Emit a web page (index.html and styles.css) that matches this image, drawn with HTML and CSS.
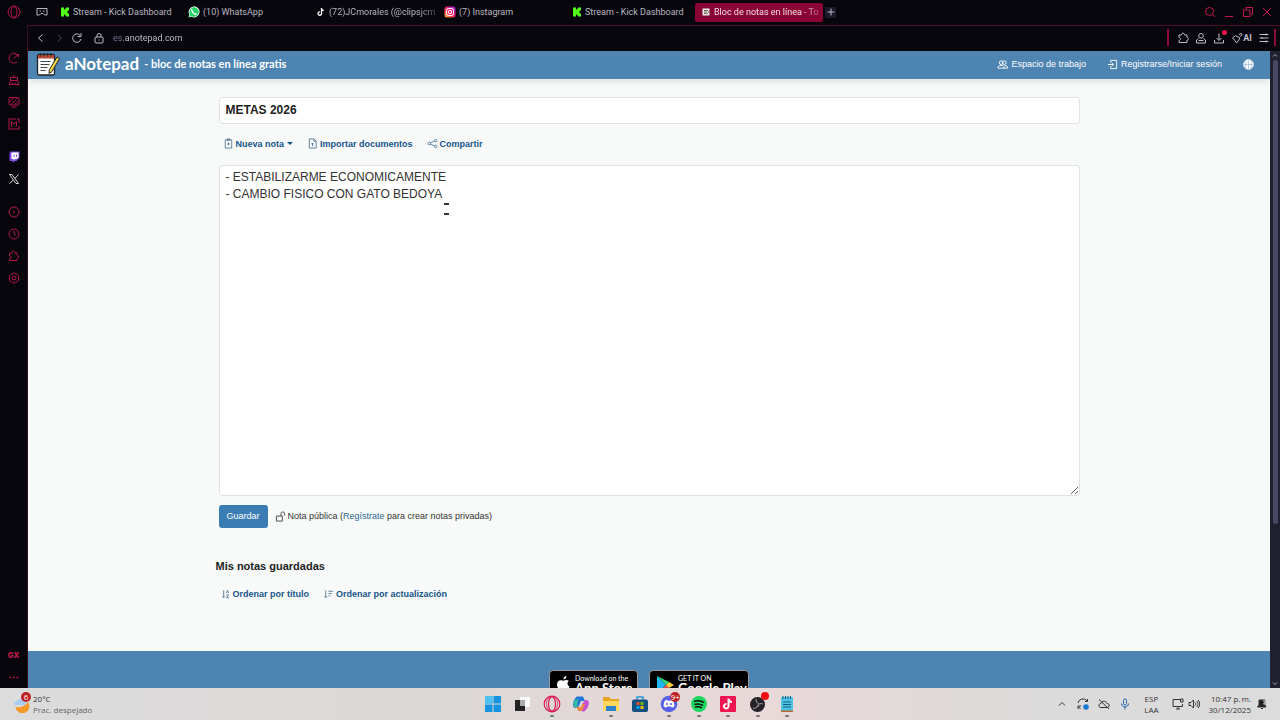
FILE: index.html
```html
<!DOCTYPE html>
<html lang="es">
<head>
  <meta charset="UTF-8">
  <meta name="viewport" content="width=device-width, initial-scale=1.0">
  <title>Bloc de notas en línea</title>
  <link rel="stylesheet" href="styles.css">
</head>
<body>
  <div class="tabbar">
    <button class="opera" aria-label="Opera GX"><svg width="14" height="14" viewBox="0 0 14 14"><circle cx="7" cy="7" r="6"/><ellipse cx="7" cy="7" rx="3" ry="5.500"/></svg></button>
    <button class="corner" aria-label="GX Corner"><svg width="12" height="10" viewBox="0 0 12 10"><path d="M1 1.500h10v6.500H8.500L7 6.500H5L3.500 8H1zM3.500 4h1.500M7 4h1.500"/></svg></button>
    <div class="tabs">
      <button class="tab"><svg class="fav" viewBox="0 0 10 10"><path fill="#53fc18" d="M1 .5h3v2h1v-1h1v-1h3v3H8v1H7v1h1v1h1v3H6v-1H5v-1H4v2H1z"/></svg><span>Stream - Kick Dashboard</span></button>
      <button class="tab"><svg class="fav wide" viewBox="0 0 12 12"><path fill="#fff" d="M.5 11.500l.8-3a5.500 5.500 0 1 1 2.200 2.200z"/><path fill="#25d366" d="M1.200 10.900l.7-2.500a4.800 4.800 0 1 1 1.800 1.800z"/><path d="M4 3.300c-.7 1 .6 3 2 4.200 1 .8 2.200 1 2.600.1" stroke="#fff" stroke-width="1.500" fill="none"/></svg><span>(10) WhatsApp</span></button>
      <button class="tab fade"><svg class="fav" viewBox="0 0 10 10"><path d="M5.500 1v5.500A1.700 1.700 0 1 1 4 4.900M5.500 1.500c.2 1.300 1 2 2.300 2" stroke="#fff" stroke-width="1.300" fill="none"/></svg><span>(72)JCmorales (@clipsjcm</span></button>
      <button class="tab"><svg class="fav wide" viewBox="0 0 12 12"><defs><linearGradient id="ig" x1="0" y1="1" x2="1" y2="0"><stop stop-color="#ffb52e"/><stop offset=".5" stop-color="#f01c6c"/><stop offset="1" stop-color="#9028e8"/></linearGradient></defs><rect x=".5" y=".5" width="11" height="11" rx="2.500" fill="url(#ig)"/><g fill="none" stroke="#fff"><rect x="2.500" y="2.500" width="7" height="7" rx="2"/><circle cx="6" cy="6" r="1.700"/></g></svg><span>(7) Instagram</span></button>
      <button class="tab"><svg class="fav" viewBox="0 0 10 10"><path fill="#53fc18" d="M1 .5h3v2h1v-1h1v-1h3v3H8v1H7v1h1v1h1v3H6v-1H5v-1H4v2H1z"/></svg><span>Stream - Kick Dashboard</span></button>
      <button class="tab fade active"><svg class="fav" viewBox="0 0 10 10"><path fill="#eee" d="M1.500 1.500h7v7h-7z"/><path d="M3 3.500h4M3 5h3M3 6.500h2M9 3L5.500 7.500" stroke="#765"/></svg><span>Bloc de notas en línea - To</span></button>
    </div>
    <button class="newtab" aria-label="Nueva pestaña"><svg width="8" height="8" viewBox="0 0 8 8"><path d="M4 .5v7M.5 4h7"/></svg></button>
    <div class="winbtns">
      <button aria-label="Buscar pestañas"><svg width="12" height="12" viewBox="0 0 12 12"><circle cx="5.500" cy="5.500" r="4"/><path d="M8.500 8.500L11 11"/></svg></button>
      <button aria-label="Minimizar"><svg width="12" height="12" viewBox="0 0 12 12"><path d="M2 10.500h8"/></svg></button>
      <button aria-label="Restaurar"><svg width="12" height="12" viewBox="0 0 12 12"><path d="M1.500 4h6.500v6.500H1.500zM4 3.500v-2h6.500V8H8.500"/></svg></button>
      <button aria-label="Cerrar"><svg width="12" height="12" viewBox="0 0 12 12"><path d="M2 2l8 8M10 2l-8 8"/></svg></button>
    </div>
  </div>

  <div class="window">
    <nav class="sidebar">
      <div class="group">
        <button aria-label="GX Control"><svg viewBox="0 0 12 12"><path d="M9 10A5 5 0 1 1 8 1.500M5.500 6.500l5-4M7.500 2.500h3V5.500"/></svg></button>
        <button aria-label="GX Cleaner"><svg viewBox="0 0 12 12"><path d="M6 1v2.500M2.500 6.500v-3h7v3zM2.500 6.500L1 10.500h10L9.500 6.500M4 10.500l.5-2M7.500 10.500l-.5-2"/></svg></button>
        <button aria-label="Mods"><svg viewBox="0 0 12 12"><rect x="1" y="1.500" width="10" height="7.500" rx="1"/><path d="M1.500 6l4-4M3 8.500L9.500 2M7 8.500L10.500 5M3.500 11h5"/></svg></button>
        <button aria-label="GX Mods"><svg viewBox="0 0 12 12"><path d="M8 1H1v10h10V8M11 5V1H9M3.500 8.500v-5L6 6l2.500-2.500v5"/></svg></button>
      </div>
      <div class="group">
        <button aria-label="Twitch"><svg viewBox="0 0 12 12"><path fill="#7c4ae0" stroke="none" d="M2 .5h9.500V7L8.500 10H6.500l-2 2v-2h-3V2.500z"/><path fill="#fff" stroke="none" d="M3.500 1.500h7v5l-2 1.500H7L5.500 9.500V8h-2z"/><path stroke="#7c4ae0" d="M6 3.500v2.500M8.500 3.500v2.500"/></svg></button>
        <button aria-label="X"><svg viewBox="0 0 12 12"><path stroke="#ddd" d="M1.500 1.500h2.500l6.500 9H8zM10.500 1.500L6.800 5.500M5.300 7l-3.800 3.500"/></svg></button>
      </div>
      <div class="group">
        <button aria-label="Reproductor"><svg viewBox="0 0 12 12"><circle cx="6" cy="6" r="5"/><circle cx="6" cy="6" r=".6"/></svg></button>
        <button aria-label="Historial"><svg viewBox="0 0 12 12"><circle cx="6" cy="6" r="5"/><path d="M6 3v3l2 1"/></svg></button>
        <button aria-label="Extensiones"><svg viewBox="0 0 12 12"><path d="M1.500 3.500L4 3c0-2.500 3-2.500 3 0h2v1.700L11 7 9 8.500v2H1.500v-2C4 8.500 4 6 1.500 6z"/></svg></button>
        <button aria-label="Ajustes"><svg viewBox="0 0 12 12"><path d="M6 .8l4.600 2.600v5.200L6 11.200 1.400 8.600V3.400z"/><circle cx="6" cy="6" r="2"/></svg></button>
      </div>
      <div class="group last">
        <button class="gx">GX</button>
        <button aria-label="Más"><svg viewBox="0 0 12 12"><path stroke-width="1.500" d="M1.500 6.500h2M5 6.500h2M8.500 6.500h2"/></svg></button>
      </div>
    </nav>

    <div class="browser">
      <div class="addressbar">
        <button aria-label="Atrás"><svg viewBox="0 0 12 12"><path d="M7.500 2.500L3.500 6l4 3.500"/></svg></button>
        <button class="dim" aria-label="Adelante"><svg viewBox="0 0 12 12"><path d="M4.500 2.500l4 3.500-4 3.500"/></svg></button>
        <button aria-label="Recargar"><svg viewBox="0 0 12 12"><path d="M10 7A4.200 4.200 0 1 1 9 3.300M10 1v3.500H6.500"/></svg></button>
        <button class="lock" aria-label="Información del sitio"><svg viewBox="0 0 12 12"><rect x="2" y="5" width="8" height="6" rx="1"/><path d="M4 5V3.500a2 2 0 0 1 4 0V5M6 7.500v1"/></svg></button>
        <input class="url" type="text" aria-label="Dirección" value="es.anotepad.com">
        <div class="tools">
          <button aria-label="Extensiones"><svg viewBox="0 0 12 12"><path d="M2 3h2.500c0-2.500 3-2.500 3 0H10v2.500c2 0 2 2.500 0 2.500v2.500H2V8.500c2 0 2-3 0-3z"/></svg></button>
          <button aria-label="Perfil"><svg viewBox="0 0 12 12"><circle cx="6" cy="3.800" r="2.300"/><path d="M3.500 6.500L1.500 8v3h9V8l-2-1.500M3.500 8.500h5"/></svg></button>
          <button class="download" aria-label="Descargas"><svg viewBox="0 0 12 12"><path d="M6 1.500v6.500M3.500 6L6 8.500 8.500 6M1.500 8v3h9V8"/></svg></button>
          <button class="ai"><svg viewBox="0 0 12 12"><path d="M1.500 6l3-2.500L6 4.500l2.500 1L8 8l-2.500 3L4 8.500zM8 3l1-1.500L11 2l-.5 1.500L9 4.500"/></svg>AI</button>
          <button aria-label="Configuración rápida"><svg viewBox="0 0 12 12"><path d="M1.500 2.500h9M1.500 6h9M1.500 9.500h9M8 1.500v2M4 5v2M8 8.500v2"/></svg></button>
        </div>
      </div>

      <div class="viewport">
        <div class="page">
          <header class="navbar">
            <a class="brand" href="#">
              <svg width="24" height="24" viewBox="0 0 24 24"><rect x="1.500" y="2.500" width="17" height="20.500" rx="1.500" fill="#fff" stroke="#222" stroke-width="1.300"/><path d="M2 3h16v3.500H2z" fill="#bd4936"/><path d="M4.500 1v3.500M8 1v3.500M11.500 1v3.500M15 1v3.500" stroke="#333" stroke-width="1.200"/><path d="M4.500 9.500h10M4.500 12.500h9M4.500 15.500h7M4.500 18.500h5" stroke="#444" stroke-width="1.200"/><path d="M21 5l2.500 1.500-7.500 13-3 2 .3-3.700z" fill="#f2d94b" stroke="#222"/></svg>
              <span class="name">aNotepad</span>
              <span class="tagline">- bloc de notas en línea gratis</span>
            </a>
            <nav class="links">
              <a href="#"><svg viewBox="0 0 12 12"><circle cx="4.500" cy="4" r="2"/><circle cx="8" cy="4" r="2"/><path d="M1 10c0-2 1-3 3.500-3S8 8 8 10zM8.500 7C10.500 7 11.500 8 11.500 10H8"/></svg>Espacio de trabajo</a>
              <a href="#"><svg viewBox="0 0 12 12"><path d="M4 4V1.500h6.500v9H4V8M1 6h6M5 4l2 2-2 2"/></svg>Registrarse/Iniciar sesión</a>
              <a class="globe" href="#" aria-label="Idioma"><svg viewBox="0 0 12 12"><circle cx="6" cy="6" r="5.200" fill="#fff"/><path stroke="#8fb3d0" stroke-width=".7" d="M6 1v10M1 6h10M3.500 2c-1 2-1 6 0 8M8.500 2c1 2 1 6 0 8"/></svg></a>
            </nav>
          </header>

          <main class="container">
            <form class="note">
              <input class="title" type="text" aria-label="Título" value="METAS 2026">
              <div class="toolbar">
                <a href="#"><svg viewBox="0 0 12 12"><path d="M2.500 2h7v9h-7zM4.500 1h3v1.500h-3zM6 5v3M4.500 6.500h3"/></svg>Nueva nota<i class="caret"></i></a>
                <a href="#"><svg viewBox="0 0 12 12"><path d="M2.500 1h5L10 3.500V11H2.500zM7.500 1v2.500H10M6 9V5.500M4.800 6.700L6 5.500l1.200 1.200"/></svg>Importar documentos</a>
                <a href="#"><svg viewBox="0 0 12 12"><circle cx="2.500" cy="6" r="1.400"/><circle cx="9.500" cy="2.800" r="1.400"/><circle cx="9.500" cy="9.200" r="1.400"/><path d="M3.800 5.400l4.400-2M3.800 6.600l4.400 2"/></svg>Compartir</a>
              </div>
              <div class="editor">
                <textarea aria-label="Nota" spellcheck="false">- ESTABILIZARME ECONOMICAMENTE
- CAMBIO FISICO CON GATO BEDOYA</textarea>
                <span class="pointer"></span>
              </div>
              <div class="actions">
                <button type="button" class="save">Guardar</button>
                <svg viewBox="0 0 12 12"><path d="M1.500 5.500H8V11H1.500zM6.500 5.500V3a2 2 0 0 1 4 0v2"/></svg>
                <span>Nota pública (<a href="#">Regístrate</a> para crear notas privadas)</span>
              </div>
            </form>

            <section class="saved">
              <h2>Mis notas guardadas</h2>
              <div class="sort">
                <a href="#"><svg viewBox="0 0 12 12"><path d="M4 1.500v8M2.500 8L4 9.500 5.500 8M7 4.500L8.200 1.500 9.500 4.500M7 6.500h2.500l-2.500 3h2.500"/></svg>Ordenar por título</a>
                <a href="#"><svg viewBox="0 0 12 12"><path d="M3 1.500v8M1.500 8L3 9.500 4.500 8M6 2.500h5M6 5h3.500M6 7.500h2"/></svg>Ordenar por actualización</a>
              </div>
            </section>
          </main>

          <footer class="footer">
            <a class="badge" href="#">
              <svg width="15" height="18" viewBox="0 0 15 18"><path fill="#fff" d="M10.500 1c0 2-1.300 3.300-3 3.400C7.400 2.700 8.800 1.200 10.500 1zM12.800 6C11 7.200 11 10.400 13.500 11.500 12.700 14 11.300 16 10 16c-1 0-1.300-.6-2.500-.6S5.800 16 5 16C3.200 16 1 12.500 1 9.500c0-4 3.500-5.300 6.500-3.700C9.500 4.800 11.500 4.600 12.800 6z"/></svg>
              <span><small>Download on the</small><b>App Store</b></span>
            </a>
            <a class="badge play" href="#">
              <svg width="18" height="20" viewBox="0 0 18 20"><path fill="#20b8f4" d="M1 1v18l9-9z"/><path fill="#2bd67b" d="M1 1l9 9 3-3z"/><path fill="#f5454f" d="M1 19l9-9 3 3z"/><path fill="#ffcf3f" d="M13 7l5 3-5 3-3-3z"/></svg>
              <span><small>GET IT ON</small><b>Google Play</b></span>
            </a>
          </footer>
        </div>
        <div class="scrollbar">
          <svg viewBox="0 0 8 8"><path d="M2 5l2-2 2 2"/></svg>
          <div class="track"><div class="thumb"></div></div>
          <svg viewBox="0 0 8 8"><path d="M2 3l2 2 2-2"/></svg>
        </div>
      </div>
    </div>
  </div>

  <div class="taskbar">
    <button class="weather">
      <span class="sky"><svg width="18" height="18" viewBox="0 0 18 18"><path fill="#f39a27" d="M15 7a7 7 0 1 1-12.500 5C8 13 12 11 15 7z"/><path fill="#a8cdf0" d="M1 9c0-2 2-3 3-2.500C5 3 10 3 11 6.500c3 0 3 3.500 0 3.500H3C2 10 1 9.700 1 9z"/></svg><i>6</i></span>
      <span>20°C<small>Prac. despejado</small></span>
    </button>
    <div class="apps">
      <button aria-label="Inicio"><svg viewBox="0 0 18 18"><path fill="#1793df" d="M1 1h7.500v7.500H1zM9.500 1H17v7.500H9.500zM1 9.500h7.500V17H1zM9.500 9.500H17V17H9.500z"/><path fill="#4cc2f5" d="M1 1h7.500v7.500H1z"/></svg></button>
      <button aria-label="Vista de tareas"><svg viewBox="0 0 18 18"><path fill="#fafafa" d="M7 2h10v10H7z"/><path fill="#222" d="M2 5h10v11H2z"/><path fill="#aaa" d="M7 5h5v6H7z"/></svg></button>
      <button class="open" aria-label="Opera GX"><svg viewBox="0 0 18 18"><g fill="none" stroke="#d81b55" stroke-width="1.200"><circle cx="9" cy="9" r="7.800"/><ellipse cx="9" cy="9" rx="3.500" ry="7"/><ellipse cx="9" cy="9" rx="5.500" ry="7.500" stroke-width=".7"/></g></svg></button>
      <button aria-label="Copilot"><svg viewBox="0 0 18 18"><path fill="#2475d8" d="M5 1.500h6l2 4.500H9L6 13H3C-1 12 2 3 5 1.500z"/><path fill="#39bda0" d="M1.500 6l4.500-2-1 9-3-1z"/><path fill="#e88b42" d="M4 12h5l1-3h4l-3 7H8c-3 0-2-2-4-4z"/><path fill="#c64fd3" d="M13 5h2c4 1 1 10-3 11.500h-2L13 9h-3z"/></svg></button>
      <button class="open" aria-label="Explorador"><svg viewBox="0 0 18 18"><path fill="#e8a51c" d="M1 2h6l2 2h8v6H1z"/><path fill="#ffd65c" d="M1 6h16v10H1z"/><path fill="#2b83cc" d="M4 11h10v5H4z"/></svg></button>
      <button aria-label="Store"><svg viewBox="0 0 18 18"><path fill="none" stroke="#3195d8" stroke-width="1.500" d="M6 5V2h6v3"/><rect x="1" y="4.500" width="16" height="12.500" rx="2" fill="#155081"/><path fill="#f25022" d="M5.500 7h3v3h-3z"/><path fill="#7fba00" d="M9.500 7h3v3h-3z"/><path fill="#00a4ef" d="M5.500 11h3v3h-3z"/><path fill="#ffb900" d="M9.500 11h3v3h-3z"/></svg></button>
      <button class="open" aria-label="Discord"><svg viewBox="0 0 18 18"><circle cx="9" cy="9" r="8.300" fill="#5661e8"/><path fill="#fff" d="M5 5.500l2-.7.5 1h3l.5-1 2 .7c1.200 2 1.500 4 1.300 6l-2.300 1.200-.8-1.200H6.800L6 12.700l-2.300-1.200c-.2-2 .1-4 1.300-6z"/><circle cx="7" cy="9" r="1" fill="#5661e8"/><circle cx="11" cy="9" r="1" fill="#5661e8"/></svg><i>9+</i></button>
      <button class="open" aria-label="Spotify"><svg viewBox="0 0 18 18"><circle cx="9" cy="9" r="8" fill="#1ed760"/><path fill="none" stroke="#111" stroke-width="1.500" d="M4 6.500c4-1.300 7-.8 10 1M4.500 9.500c3-1 6-.6 8.500 1M5 12c3-.7 5-.4 7 .8"/></svg></button>
      <button class="open" aria-label="TikTok"><svg viewBox="0 0 18 18"><rect x="1" y="1" width="16" height="16" rx="1" fill="#ee1550"/><path fill="none" stroke="#fff" stroke-width="2" d="M9.500 3.500v8A2.300 2.300 0 1 1 7.500 9M9.500 4c.4 2 1.700 3 3.500 3"/></svg></button>
      <button class="open rec" aria-label="OBS"><svg viewBox="0 0 18 18"><circle cx="8.500" cy="9.500" r="7.500" fill="#242226"/><path fill="none" stroke="#aaa" d="M7 4c0 3 1 4 3 5M14 9c-3-1-5 0-5 3M4 13c2 1 4 0 5-3"/></svg><i></i></button>
      <button class="open" aria-label="Bloc de notas"><svg viewBox="0 0 18 18"><rect x="3" y="2" width="12" height="14" rx="1" fill="#50c5e3"/><path stroke="#135e82" d="M5 1v3M7.500 1v3M10 1v3M12.500 1v3M5 7h8M5 9.500h8M5 12h8"/><path fill="#b4692e" d="M3 15.500h12V17H3z"/></svg></button>
    </div>
    <div class="tray">
      <button aria-label="Iconos ocultos"><svg viewBox="0 0 12 12"><path d="M3 7.500l3-3 3 3"/></svg></button>
      <button aria-label="Actualización"><svg viewBox="0 0 12 12"><path d="M1 5a5 5 0 0 1 9-2M10.500 1v2.500H8M1 11V8h3M1.500 8.500l2 2.500"/><circle cx="9" cy="9" r="2.800" fill="#1879d2" stroke="none"/></svg></button>
      <button aria-label="OneDrive"><svg viewBox="0 0 12 12"><path d="M3 9.500c-3 0-2.500-4 0-4 .5-3 5-3 6 0 3 0 3 4 0 4zM1 1.500l10 9.500"/></svg></button>
      <button class="mic" aria-label="Micrófono"><svg viewBox="0 0 12 12"><rect x="4.500" y="1" width="3" height="6" rx="1.500"/><path d="M2.500 5.500c0 4.500 7 4.500 7 0M6 9v2.500"/></svg></button>
      <button class="lang"><span>ESP</span><span>LAA</span></button>
      <button class="sys" aria-label="Red y volumen"><svg viewBox="0 0 12 12"><path d="M8 1.500H1v7h9.500V6M4 11h4M6 8.500V11M8.500 1h2.500v3H8.500z"/></svg><svg viewBox="0 0 12 12"><path d="M1 4.500h2L5.500 2v8L3 7.500H1zM7 4.500c1 1 1 2 0 3M8.500 3c2 2 2 4 0 6M10 2c2.500 2.500 2.500 5.500 0 8"/></svg></button>
      <button class="clock"><span>10:47 p.&#8239;m.</span><span>30/12/2025</span></button>
      <button class="bell" aria-label="Notificaciones"><svg viewBox="0 0 12 12"><path fill="#222" d="M3 2h6v5l1 2H1.500L3 7zM5 10.500h2"/><path stroke="#ddd" d="M7 3h3L7.500 6H10"/></svg></button>
    </div>
  </div>
</body>
</html>
```
FILE: styles.css
```css
* {
  box-sizing: border-box;
}
body {
  margin: 0;
  height: 100vh;
  display: flex;
  flex-direction: column;
  overflow: hidden;
  background: #06060c;
  font-family: "Liberation Sans", Arial, sans-serif;
  font-size: 9px;
}
button {
  border: 0;
  padding: 0;
  background: none;
  color: inherit;
  font: inherit;
  display: flex;
  align-items: center;
  justify-content: center;
}
a {
  color: inherit;
  text-decoration: none;
}
svg {
  display: block;
  flex: none;
  fill: none;
}

/* tabs */
.tabbar {
  flex: none;
  height: 25px;
  padding-bottom: 1px;
  display: flex;
  align-items: center;
  font-family: Roboto, sans-serif;
  color: #b9b8c0;
}
.tabbar svg {
  stroke: currentColor;
}
.tabbar .opera {
  width: 28px;
  color: #b01747;
}
.corner {
  width: 27px;
}
.tabs {
  display: flex;
  min-width: 0;
}
.tab {
  width: 128px;
  height: 19px;
  padding: 0 5px;
  gap: 3px;
  justify-content: flex-start;
  border-radius: 2px;
}
.tab span {
  white-space: nowrap;
}
.tab.fade span {
  mask-image: linear-gradient(to right, #000 84%, rgba(0, 0, 0, 0.3));
}
.tab.active {
  padding-left: 6px;
  background: #8b0534;
  color: #f3dce5;
}
.tab .fav {
  width: 10px;
  height: 10px;
  stroke: none;
}
.tab .fav.wide {
  width: 12px;
  height: 12px;
}
.newtab {
  width: 11px;
  height: 11px;
  margin-left: 2px;
  background: #1c1a2a;
}
.winbtns {
  display: flex;
  gap: 7px;
  margin-left: auto;
  padding-right: 7px;
  color: #c01a4c;
}

/* opera sidebar */
.window {
  flex: 1;
  min-height: 0;
  display: flex;
}
.sidebar {
  flex: none;
  width: 28px;
  padding-top: 22px;
  display: flex;
  flex-direction: column;
  gap: 11px;
  border-right: 1px solid #3d0b20;
  color: #b01747;
}
.sidebar button {
  width: 27px;
  height: 22px;
}
.sidebar svg {
  width: 12px;
  height: 12px;
  stroke: currentColor;
}
.sidebar .last {
  margin-top: auto;
}
.sidebar .gx {
  font: 900 8px Inter, sans-serif;
}
.browser {
  flex: 1;
  min-width: 0;
  display: flex;
  flex-direction: column;
}
.addressbar {
  flex: none;
  height: 26px;
  padding: 0 4px 2px 7px;
  display: flex;
  align-items: center;
  gap: 6px;
  border-top: 1px solid #4f0d29;
  color: #bfbec6;
}
.addressbar svg {
  width: 12px;
  height: 12px;
  stroke: currentColor;
}
.addressbar .dim {
  color: #45444e;
}
.lock {
  margin-left: 4px;
}
.url {
  flex: 1;
  min-width: 0;
  border: 0;
  padding: 0;
  margin-left: 2px;
  font: 9px Roboto, sans-serif;
  outline: none;
  color: transparent;
  background: linear-gradient(to right, #77739a 10px, #c6c5cc 10px);
  background-clip: text;
  -webkit-background-clip: text;
}
.tools {
  display: flex;
  align-items: center;
  gap: 6px;
  height: 17px;
  padding: 0 4px 0 8px;
  border-left: 2px solid #8b0c38;
  border-right: 2px solid #8b0c38;
}
.download {
  position: relative;
}
.download::after {
  content: "";
  position: absolute;
  top: -2px;
  right: -2px;
  width: 5px;
  height: 5px;
  border-radius: 50%;
  background: #f0144f;
}
.ai {
  font: bold 9px Roboto, sans-serif;
}

/* page */
.viewport {
  flex: 1;
  min-height: 0;
  display: flex;
}
.page {
  flex: 1;
  min-width: 0;
  overflow: hidden;
  background: #f7faf9;
  color: #333;
}
.navbar {
  height: 28px;
  padding: 0 16px 2px 8px;
  display: flex;
  align-items: center;
  justify-content: space-between;
  background: #4d84b2;
  color: #fff;
  box-shadow: 0 1px 8px rgba(0, 0, 0, 0.15);
}
.brand {
  display: flex;
  align-items: center;
  gap: 5px;
  font-family: Lato, sans-serif;
  font-weight: bold;
}
.name {
  font-size: 17px;
  line-height: 24px;
}
.tagline {
  font-size: 11px;
  line-height: 22px;
}
.links {
  display: flex;
  align-items: center;
  gap: 21px;
}
.links a {
  display: flex;
  align-items: center;
  gap: 3px;
}
.links svg {
  width: 11px;
  height: 11px;
  stroke: #fff;
}
.container {
  max-width: 867px;
  margin: 0 auto;
  padding-top: 18px;
}
.note {
  padding: 0 3px;
}
.title {
  display: block;
  width: 100%;
  height: 27px;
  padding: 0 6px 2px;
  border: 1px solid #dfe3e3;
  border-radius: 3px;
  background: #fff;
  color: #222;
  font: bold 12px "Liberation Sans", Arial, sans-serif;
}
.toolbar,
.sort {
  display: flex;
  align-items: center;
  color: #17548a;
  font-weight: bold;
}
.toolbar {
  height: 41px;
  padding: 0 0 2px 4px;
  gap: 14px;
}
.toolbar a,
.sort a {
  display: flex;
  align-items: center;
  gap: 2px;
}
.toolbar svg,
.sort svg {
  width: 11px;
  height: 11px;
  stroke: #597b96;
}
.caret {
  margin-left: 1px;
  border: 3px solid transparent;
  border-top-color: currentColor;
  border-bottom: 0;
}
.editor {
  position: relative;
}
.editor textarea {
  display: block;
  width: 100%;
  height: 331px;
  padding: 3px 6px;
  border: 1px solid #dfe3e3;
  border-radius: 3px;
  background: #fff;
  color: #333;
  font: 12px/17px "Liberation Sans", Arial, sans-serif;
  outline: none;
}
/* text cursor ends */
.pointer {
  position: absolute;
  left: 225px;
  top: 38px;
  width: 5px;
  height: 12px;
  border: solid #333;
  border-width: 2px 0;
}
.actions {
  display: flex;
  align-items: center;
  margin-top: 9px;
  line-height: 11px;
}
.save {
  width: 49px;
  height: 23px;
  margin-right: 7px;
  border-radius: 3px;
  background: #3a7db4;
  color: #fff;
}
.actions svg {
  width: 11px;
  height: 11px;
  margin-right: 2px;
  stroke: #444;
}
.actions a {
  color: #316794;
}
.saved {
  padding: 31px 0 43px;
}
.saved h2 {
  margin: 0;
  color: #222;
  font-size: 11px;
  line-height: 14px;
}
.sort {
  height: 28px;
  margin-top: 7px;
  padding-left: 4px;
  gap: 14px;
}
.footer {
  height: 160px;
  padding-top: 19px;
  display: flex;
  justify-content: center;
  gap: 11px;
  background: #4d84b2;
}
.badge {
  width: 89px;
  height: 30px;
  padding: 4px 6px;
  display: flex;
  gap: 4px;
  border: 1px solid #999;
  border-radius: 4px;
  background: #000;
  color: #fff;
  font-family: Lato, sans-serif;
  white-space: nowrap;
}
.badge.play {
  width: 100px;
}
.badge small {
  display: block;
  font-size: 7px;
  line-height: 7px;
}
.badge b {
  display: block;
  font-size: 13px;
  line-height: 13px;
}
.scrollbar {
  flex: none;
  width: 10px;
  display: flex;
  flex-direction: column;
  align-items: center;
  background: #1f2130;
}
.scrollbar svg {
  width: 8px;
  height: 9px;
  stroke: #aaa;
}
.track {
  flex: 1;
  width: 5px;
}
.thumb {
  height: 75%;
  border-radius: 3px;
  background: #46485f;
}

/* windows taskbar */
.taskbar {
  flex: none;
  height: 32px;
  display: grid;
  grid-template-columns: 1fr 312px 1fr;
  align-items: center;
  background: linear-gradient(to right, #dcdcdc 0%, #dcd8d6 35%, #e9d9d9 60%, #dcdada 80%, #dcdcdc 100%);
  color: #333;
  font-family: "Open Sans", sans-serif;
  font-size: 8px;
  line-height: 11px;
}
.weather {
  padding-left: 13px;
  gap: 2px;
  justify-self: start;
  text-align: left;
}
.weather small {
  display: block;
  color: #666;
  font-size: 8px;
}
.sky,
.apps button {
  position: relative;
}
.sky i,
.apps i {
  position: absolute;
  top: -3px;
  right: 0;
  min-width: 10px;
  height: 10px;
  border-radius: 5px;
  background: #bd2024;
  color: #fff;
  font-size: 8px;
  font-style: normal;
  line-height: 10px;
  text-align: center;
}
.apps i {
  right: -2px;
}
.apps {
  display: flex;
  justify-content: space-between;
}
.apps svg {
  width: 18px;
  height: 18px;
}
.apps .rec i {
  min-width: 8px;
  height: 8px;
  background: #f20d12;
}
.apps .open::after {
  content: "";
  position: absolute;
  bottom: -4px;
  left: 7px;
  width: 4px;
  height: 2px;
  border-radius: 1px;
  background: #777;
}
.tray {
  justify-self: end;
  display: flex;
  align-items: center;
  gap: 9px;
  padding-right: 12px;
}
.tray svg {
  width: 12px;
  height: 12px;
  stroke: #333;
}
.tray .mic svg {
  stroke: #2565a8;
}
.lang,
.clock {
  flex-direction: column;
}
.lang {
  margin: 0 4px;
}
.clock {
  align-items: flex-end;
}
.bell {
  margin-left: -4px;
}
.sys {
  gap: 4px;
}
```
